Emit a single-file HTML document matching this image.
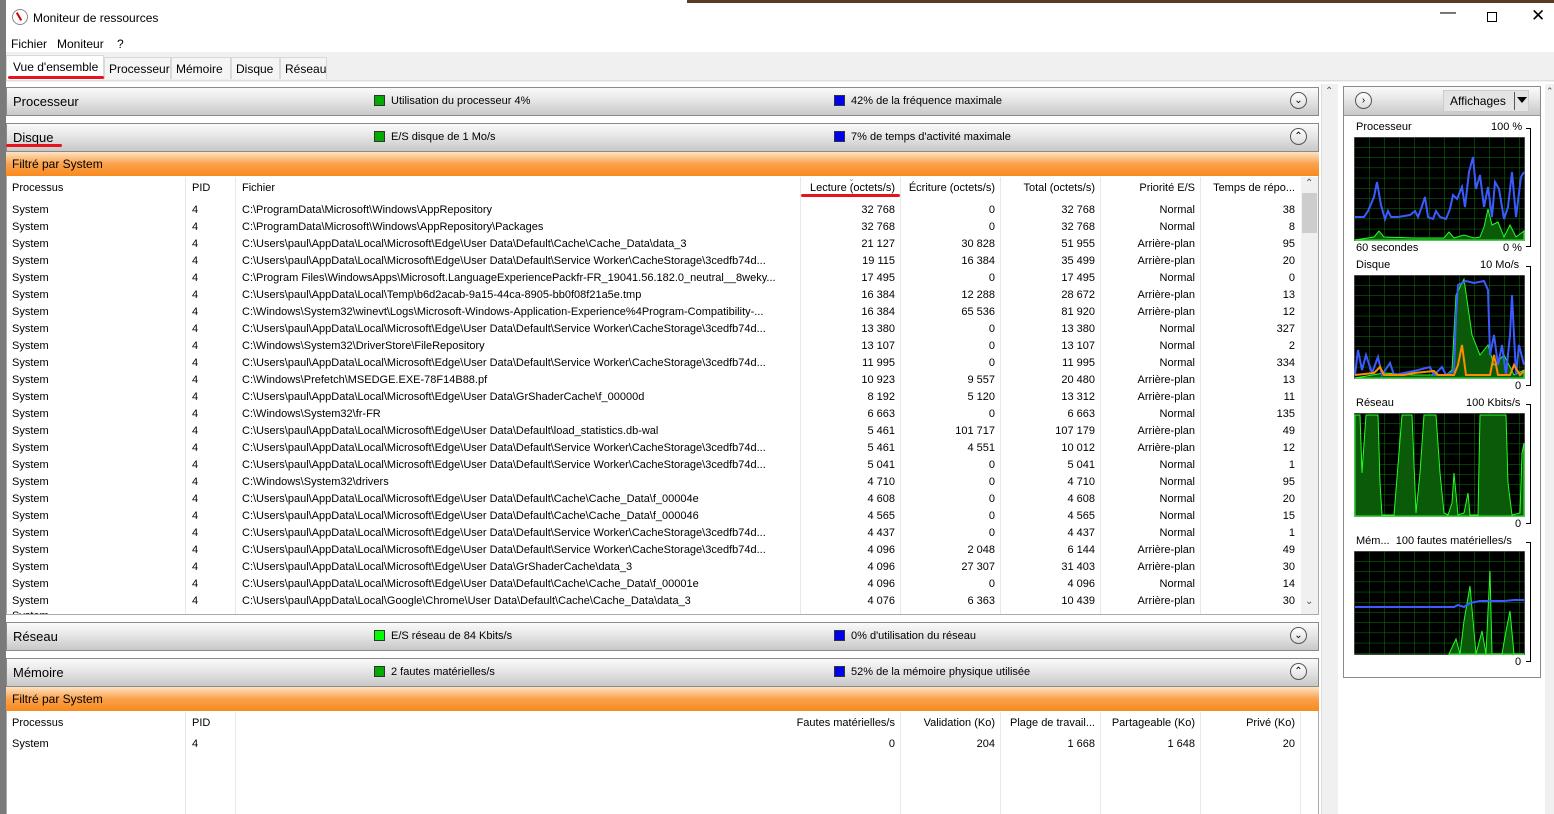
<!DOCTYPE html>
<html><head><meta charset="utf-8"><style>
*{margin:0;padding:0;box-sizing:border-box}
body{width:1554px;height:814px;overflow:hidden;background:#fff;font-family:"Liberation Sans",sans-serif;font-size:11px;color:#000;position:relative}
.a{position:absolute;white-space:nowrap}
.hdr{position:absolute;left:6px;width:1313px;height:29px;border:1px solid #8a8a8a;background:linear-gradient(#fafafa,#e6e6e6 45%,#c8c8c8);}
.hdr .t{position:absolute;left:6px;top:6px;font-size:13px}
.sq{position:absolute;width:11px;height:11px;border:1px solid #333;background:#0a0}
.sq.b{background:#0000f0}
.circ{position:absolute;width:17px;height:17px;border:1px solid #555;border-radius:50%;background:linear-gradient(#fff,#ddd);font-size:10px;text-align:center;line-height:15px}
.orange{position:absolute;left:6px;width:1313px;height:24px;background:linear-gradient(#fde3c4,#fba14a 50%,#f88a1e);font-size:12px;padding:5px 6px}
.row{position:absolute;left:6px;width:1295px;height:17px}
.row span{position:absolute;top:2px;white-space:nowrap}
.vl{position:absolute;width:1px;background:#e8e8e8}
.tab{position:absolute;top:57px;height:22px;border:1px solid #d9d9d9;border-bottom:none;font-size:12px;padding:4px 4px;background:#f5f5f5}
.sb{position:absolute;background:#f0f0f0}
</style></head><body>
<div class="a" style="left:687px;top:0;width:867px;height:3px;background:#5a3a22"></div>
<div class="a" style="left:0;top:0;width:6px;height:814px;background:#7a7a7a"></div>
<div class="a" style="left:6px;top:3px;width:1548px;height:811px;background:#fff"></div>
<div class="a" style="left:12px;top:9px;width:16px;height:16px;border-radius:50%;border:1.5px solid #888;background:#fff"><div style="position:absolute;left:5px;top:2px;width:2px;height:9px;background:#c00;transform:rotate(-30deg)"></div></div>
<div class="a" style="left:33px;top:11px;font-size:12px">Moniteur de ressources</div>
<div class="a" style="left:1440px;top:4px;font-size:16px">&#8212;</div>
<div class="a" style="left:1487px;top:12px;width:10px;height:10px;border:1px solid #000"></div>
<div class="a" style="left:1531px;top:6px;font-size:17px">&#10005;</div>
<div class="a" style="left:11px;top:37px;font-size:12px">Fichier&nbsp;&nbsp;&nbsp;Moniteur&nbsp;&nbsp;&nbsp;&nbsp;?</div>
<div class="a" style="left:6px;top:52px;width:1548px;height:30px;background:#f0f0f0"></div>
<div class="tab" style="left:6px;top:55px;height:25px;background:#fff;width:98px;padding-left:6px">Vue d'ensemble</div>
<div class="tab" style="left:104px;width:67px">Processeur</div>
<div class="tab" style="left:171px;width:60px">Mémoire</div>
<div class="tab" style="left:231px;width:49px">Disque</div>
<div class="tab" style="left:280px;width:47px">Réseau</div>
<div class="a" style="left:8px;top:76px;width:96px;height:3px;background:#e8141c;border-radius:2px"></div>
<div class="a" style="left:6px;top:80px;width:1548px;height:1px;background:#ddd"></div>

<div class="hdr" style="top:87px"><div class="t">Processeur</div></div>
<div class="sq" style="left:374px;top:95px"></div><div class="a" style="left:391px;top:95px">Utilisation du processeur 4%</div>
<div class="sq b" style="left:834px;top:95px"></div><div class="a" style="left:851px;top:95px">42% de la fréquence maximale</div>
<div class="circ" style="left:1290px;top:92px">&#8964;</div>

<div class="hdr" style="top:123px"><div class="t">Disque</div></div>
<div class="a" style="left:6px;top:144px;width:56px;height:3px;background:#e8141c;border-radius:2px"></div>
<div class="sq" style="left:374px;top:131px"></div><div class="a" style="left:391px;top:131px">E/S disque de 1 Mo/s</div>
<div class="sq b" style="left:834px;top:131px"></div><div class="a" style="left:851px;top:131px">7% de temps d'activité maximale</div>
<div class="circ" style="left:1290px;top:128px">&#8963;</div>
<div class="orange" style="top:152px">Filtré par System</div>

<div class="a" style="left:6px;top:176px;width:1313px;height:439px;border-left:1px solid #aaa;border-right:1px solid #aaa;border-bottom:1px solid #aaa"></div>
<div class="vl" style="left:185px;top:177px;height:437px"></div>
<div class="vl" style="left:235px;top:177px;height:437px"></div>
<div class="vl" style="left:800px;top:177px;height:437px"></div>
<div class="vl" style="left:900px;top:177px;height:437px"></div>
<div class="vl" style="left:1000px;top:177px;height:437px"></div>
<div class="vl" style="left:1100px;top:177px;height:437px"></div>
<div class="vl" style="left:1200px;top:177px;height:437px"></div>
<div class="row" style="top:180px"><span style="left:6px">Processus</span><span style="left:186px">PID</span><span style="left:236px">Fichier</span><span style="right:406px">Lecture (octets/s)</span><span style="right:306px">Écriture (octets/s)</span><span style="right:206px">Total (octets/s)</span><span style="right:106px">Priorité E/S</span><span style="right:6px">Temps de répo...</span></div>
<div class="a" style="left:848px;top:174px;font-size:8px;color:#999">&#8964;</div>
<div class="a" style="left:801px;top:194px;width:99px;height:3px;background:#e8141c;border-radius:2px"></div>
<div class="sb" style="left:1301px;top:177px;width:17px;height:437px"></div>
<div class="a" style="left:1302px;top:193px;width:15px;height:40px;background:#cdcdcd"></div>
<div class="a" style="left:1305px;top:178px;font-size:10px;color:#555">&#8963;</div>
<div class="a" style="left:1305px;top:596px;font-size:10px;color:#555">&#8964;</div>
<div id="rows"></div>

<div class="hdr" style="top:622px"><div class="t">Réseau</div></div>
<div class="sq" style="left:374px;top:630px;background:#0f0"></div><div class="a" style="left:391px;top:630px">E/S réseau de 84 Kbits/s</div>
<div class="sq b" style="left:834px;top:630px"></div><div class="a" style="left:851px;top:630px">0% d'utilisation du réseau</div>
<div class="circ" style="left:1290px;top:627px">&#8964;</div>

<div class="hdr" style="top:658px"><div class="t">Mémoire</div></div>
<div class="sq" style="left:374px;top:666px"></div><div class="a" style="left:391px;top:666px">2 fautes matérielles/s</div>
<div class="sq b" style="left:834px;top:666px"></div><div class="a" style="left:851px;top:666px">52% de la mémoire physique utilisée</div>
<div class="circ" style="left:1290px;top:663px">&#8963;</div>
<div class="orange" style="top:687px">Filtré par System</div>
<div class="a" style="left:6px;top:711px;width:1313px;height:103px;border-left:1px solid #aaa;border-right:1px solid #aaa"></div>
<div class="vl" style="left:185px;top:712px;height:102px"></div>
<div class="vl" style="left:235px;top:712px;height:102px"></div>
<div class="vl" style="left:900px;top:712px;height:102px"></div>
<div class="vl" style="left:1000px;top:712px;height:102px"></div>
<div class="vl" style="left:1100px;top:712px;height:102px"></div>
<div class="vl" style="left:1200px;top:712px;height:102px"></div>
<div class="vl" style="left:1300px;top:712px;height:102px"></div>
<div class="row" style="top:715px"><span style="left:6px">Processus</span><span style="left:186px">PID</span><span style="right:406px">Fautes matérielles/s</span><span style="right:306px">Validation (Ko)</span><span style="right:206px">Plage de travail...</span><span style="right:106px">Partageable (Ko)</span><span style="right:6px">Privé (Ko)</span></div>
<div class="row" style="top:736px"><span style="left:6px">System</span><span style="left:186px">4</span><span style="right:406px">0</span><span style="right:306px">204</span><span style="right:206px">1 668</span><span style="right:106px">1 648</span><span style="right:6px">20</span></div>

<div class="sb" style="left:1321px;top:84px;width:17px;height:730px;border-left:1px solid #ddd"></div>
<div class="a" style="left:1325px;top:86px;font-size:10px;color:#555">&#8963;</div>

<div class="a" style="left:1343px;top:86px;width:198px;height:592px;border:1px solid #8a8a8a"></div>
<div class="a" style="left:1344px;top:87px;width:196px;height:29px;background:linear-gradient(#fafafa,#e6e6e6 45%,#c8c8c8);border-bottom:1px solid #999"></div>
<div class="circ" style="left:1355px;top:92px">&#8250;</div>
<div class="a" style="left:1443px;top:90px;width:86px;height:22px;background:#e4e4e4;border:1px solid #ccc;font-size:12px;padding:3px 6px">Affichages</div>
<div class="a" style="left:1514px;top:92px;width:1px;height:18px;background:#555"></div>
<div class="a" style="left:1517px;top:97px;width:0;height:0;border-left:5px solid transparent;border-right:5px solid transparent;border-top:6px solid #000"></div>
<div class="sb" style="left:1545px;top:84px;width:9px;height:730px"></div>
<div class="a" style="left:1546px;top:86px;font-size:9px;color:#555">&#8963;</div>

<div class="a" style="left:1356px;top:121px">Processeur</div><div class="a" style="left:1491px;top:121px">100 %</div>
<div class="a" style="left:1356px;top:242px">60 secondes</div><div class="a" style="left:1503px;top:242px">0 %</div>
<div class="a" style="left:1356px;top:259px">Disque</div><div class="a" style="left:1480px;top:259px">10 Mo/s</div>
<div class="a" style="left:1515px;top:380px">0</div>
<div class="a" style="left:1356px;top:397px">Réseau</div><div class="a" style="left:1466px;top:397px">100 Kbits/s</div>
<div class="a" style="left:1515px;top:518px">0</div>
<div class="a" style="left:1356px;top:535px">Mém...&nbsp; 100 fautes matérielles/s</div>
<div class="a" style="left:1515px;top:656px">0</div>
<div class="a" style="left:1526px;top:128px;width:5px;height:119px;border:1px solid #000;border-left:none"></div>
<div class="a" style="left:1526px;top:266px;width:5px;height:120px;border:1px solid #000;border-left:none"></div>
<div class="a" style="left:1526px;top:404px;width:5px;height:120px;border:1px solid #000;border-left:none"></div>
<div class="a" style="left:1526px;top:542px;width:5px;height:120px;border:1px solid #000;border-left:none"></div>

<svg class="a" style="left:1354px;top:137px" width="171" height="104" viewBox="0 0 171 104">
<defs><pattern id="g" width="15" height="10.2" patternUnits="userSpaceOnUse"><rect width="15" height="10.2" fill="#000"/><path d="M0 0V10.2M0 0H15" stroke="#0a7a0a" stroke-width="1"/></pattern></defs>
<rect width="171" height="104" fill="url(#g)" stroke="#888"/>
<polygon fill="#0a5a0a" stroke="#2f2" points="1,103 20,100 25,94 30,100 60,101 90,101 95,95 100,101 110,98 120,101 126,100 130,90 134,72 138,88 144,85 150,100 156,88 162,100 170,94 170,103"/>
<polyline fill="none" stroke="#3a5cff" stroke-width="2" points="1,80 10,80 14,74 20,60 23,45 27,68 31,82 34,74 37,80 44,80 56,78 61,74 64,80 67,72 71,60 74,80 79,82 82,74 86,80 92,82 96,72 99,58 103,62 108,50 111,70 115,35 119,20 122,52 126,38 130,70 134,50 138,80 141,45 145,52 150,82 154,70 158,35 162,80 167,40 170,35"/>
</svg>
<svg class="a" style="left:1354px;top:275px" width="171" height="104" viewBox="0 0 171 104">
<rect width="171" height="104" fill="url(#g)" stroke="#888"/>
<polygon fill="#0a5a0a" stroke="#2f2" points="1,103 30,98 60,100 92,100 98,95 102,20 110,4 118,60 126,80 134,70 140,90 150,80 160,100 170,95 170,103"/>
<polyline fill="none" stroke="#3a5cff" stroke-width="2" points="1,100 4,75 8,95 12,80 18,98 24,82 28,100 36,88 40,100 60,96 76,92 80,100 88,92 92,100 100,96 102,40 104,10 112,6 120,8 130,6 134,15 136,80 140,60 144,90 148,70 152,100 156,60 158,20 162,100 165,70 170,90"/>
<polyline fill="none" stroke="#ff8c00" stroke-width="2" points="1,100 20,98 26,92 30,100 50,100 60,98 80,96 84,100 100,100 104,90 108,70 112,100 126,100 136,100 140,80 144,100 156,100 160,90 166,100 170,96"/>
</svg>
<svg class="a" style="left:1354px;top:413px" width="171" height="104" viewBox="0 0 171 104">
<rect width="171" height="104" fill="url(#g)" stroke="#888"/>
<polygon fill="#0a5a0a" stroke="#2f2" points="1,103 1,2 6,2 8,60 12,2 20,2 24,2 26,70 28,102 40,102 48,2 52,2 58,2 62,100 66,60 70,2 82,2 86,60 90,100 94,102 98,90 100,60 104,102 110,100 114,80 116,102 124,102 126,2 152,2 154,70 158,102 166,100 168,40 170,30 170,103"/>
</svg>
<svg class="a" style="left:1354px;top:551px" width="171" height="104" viewBox="0 0 171 104">
<rect width="171" height="104" fill="url(#g)" stroke="#888"/>
<polygon fill="#0a5a0a" stroke="#2f2" points="95,103 102,88 106,103 110,70 116,35 122,103 128,80 132,103 134,60 136,20 138,103 148,103 152,80 156,60 160,103 170,103"/>
<polyline fill="none" stroke="#3a5cff" stroke-width="2" points="1,56 100,56 104,54 110,56 116,52 126,50 150,50 160,49 170,49"/>
</svg>

<script>
var d=[
["C:\\ProgramData\\Microsoft\\Windows\\AppRepository","32 768","0","32 768","Normal","38"],
["C:\\ProgramData\\Microsoft\\Windows\\AppRepository\\Packages","32 768","0","32 768","Normal","8"],
["C:\\Users\\paul\\AppData\\Local\\Microsoft\\Edge\\User Data\\Default\\Cache\\Cache_Data\\data_3","21 127","30 828","51 955","Arrière-plan","95"],
["C:\\Users\\paul\\AppData\\Local\\Microsoft\\Edge\\User Data\\Default\\Service Worker\\CacheStorage\\3cedfb74d...","19 115","16 384","35 499","Arrière-plan","20"],
["C:\\Program Files\\WindowsApps\\Microsoft.LanguageExperiencePackfr-FR_19041.56.182.0_neutral__8weky...","17 495","0","17 495","Normal","0"],
["C:\\Users\\paul\\AppData\\Local\\Temp\\b6d2acab-9a15-44ca-8905-bb0f08f21a5e.tmp","16 384","12 288","28 672","Arrière-plan","13"],
["C:\\Windows\\System32\\winevt\\Logs\\Microsoft-Windows-Application-Experience%4Program-Compatibility-...","16 384","65 536","81 920","Arrière-plan","12"],
["C:\\Users\\paul\\AppData\\Local\\Microsoft\\Edge\\User Data\\Default\\Service Worker\\CacheStorage\\3cedfb74d...","13 380","0","13 380","Normal","327"],
["C:\\Windows\\System32\\DriverStore\\FileRepository","13 107","0","13 107","Normal","2"],
["C:\\Users\\paul\\AppData\\Local\\Microsoft\\Edge\\User Data\\Default\\Service Worker\\CacheStorage\\3cedfb74d...","11 995","0","11 995","Normal","334"],
["C:\\Windows\\Prefetch\\MSEDGE.EXE-78F14B88.pf","10 923","9 557","20 480","Arrière-plan","13"],
["C:\\Users\\paul\\AppData\\Local\\Microsoft\\Edge\\User Data\\GrShaderCache\\f_00000d","8 192","5 120","13 312","Arrière-plan","11"],
["C:\\Windows\\System32\\fr-FR","6 663","0","6 663","Normal","135"],
["C:\\Users\\paul\\AppData\\Local\\Microsoft\\Edge\\User Data\\Default\\load_statistics.db-wal","5 461","101 717","107 179","Arrière-plan","49"],
["C:\\Users\\paul\\AppData\\Local\\Microsoft\\Edge\\User Data\\Default\\Service Worker\\CacheStorage\\3cedfb74d...","5 461","4 551","10 012","Arrière-plan","12"],
["C:\\Users\\paul\\AppData\\Local\\Microsoft\\Edge\\User Data\\Default\\Service Worker\\CacheStorage\\3cedfb74d...","5 041","0","5 041","Normal","1"],
["C:\\Windows\\System32\\drivers","4 710","0","4 710","Normal","95"],
["C:\\Users\\paul\\AppData\\Local\\Microsoft\\Edge\\User Data\\Default\\Cache\\Cache_Data\\f_00004e","4 608","0","4 608","Normal","20"],
["C:\\Users\\paul\\AppData\\Local\\Microsoft\\Edge\\User Data\\Default\\Cache\\Cache_Data\\f_000046","4 565","0","4 565","Normal","15"],
["C:\\Users\\paul\\AppData\\Local\\Microsoft\\Edge\\User Data\\Default\\Service Worker\\CacheStorage\\3cedfb74d...","4 437","0","4 437","Normal","1"],
["C:\\Users\\paul\\AppData\\Local\\Microsoft\\Edge\\User Data\\Default\\Service Worker\\CacheStorage\\3cedfb74d...","4 096","2 048","6 144","Arrière-plan","49"],
["C:\\Users\\paul\\AppData\\Local\\Microsoft\\Edge\\User Data\\GrShaderCache\\data_3","4 096","27 307","31 403","Arrière-plan","30"],
["C:\\Users\\paul\\AppData\\Local\\Microsoft\\Edge\\User Data\\Default\\Cache\\Cache_Data\\f_00001e","4 096","0","4 096","Normal","14"],
["C:\\Users\\paul\\AppData\\Local\\Google\\Chrome\\User Data\\Default\\Cache\\Cache_Data\\data_3","4 076","6 363","10 439","Arrière-plan","30"]];
var h="";
d.forEach(function(r,i){h+='<div class="row" style="top:'+(202+i*17)+'px"><span style="left:6px">System</span><span style="left:186px">4</span><span style="left:236px">'+r[0]+'</span><span style="right:406px">'+r[1]+'</span><span style="right:306px">'+r[2]+'</span><span style="right:206px">'+r[3]+'</span><span style="right:106px">'+r[4]+'</span><span style="right:6px">'+r[5]+'</span></div>';});
h+='<div class="a" style="left:6px;top:610px;width:1295px;height:4px;overflow:hidden"><div style="position:absolute;left:6px;top:0">System</div></div>';
document.getElementById("rows").innerHTML=h;
</script>
</body></html>
